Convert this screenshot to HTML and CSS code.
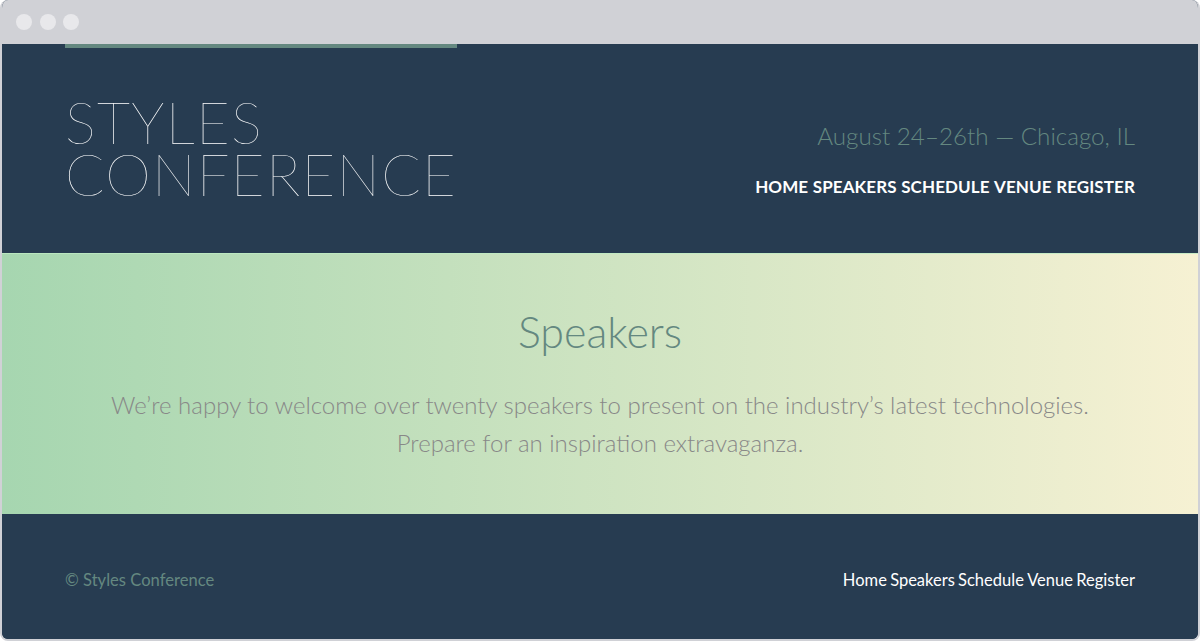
FILE: index.html
```html
<!DOCTYPE html>
<html lang="en">
<head>
<meta charset="utf-8">
<title>Styles Conference</title>
<link rel="stylesheet" href="styles.css">
</head>
<body>
<div class="window">
  <div class="chrome">
    <span class="dot"></span><span class="dot"></span><span class="dot"></span>
  </div>
  <div class="page">
    <header class="site-header">
      <div class="container header-inner">
        <h1 class="logo">Styles<br>Conference</h1>
        <div class="header-right">
          <h3 class="tagline">August 24&ndash;26th &mdash; Chicago, IL</h3>
          <nav class="primary-nav">
            <a href="#">Home</a>
            <a href="#">Speakers</a>
            <a href="#">Schedule</a>
            <a href="#">Venue</a>
            <a href="#">Register</a>
          </nav>
        </div>
      </div>
    </header>
    <section class="hero">
      <h2 class="hero-title">Speakers</h2>
      <p class="hero-text">We&rsquo;re happy to welcome over twenty speakers to present on the industry&rsquo;s latest technologies.<br>Prepare for an inspiration extravaganza.</p>
    </section>
    <footer class="site-footer">
      <div class="container footer-inner">
        <small class="copyright">&copy; Styles Conference</small>
        <nav class="footer-nav">
          <a href="#">Home</a>
          <a href="#">Speakers</a>
          <a href="#">Schedule</a>
          <a href="#">Venue</a>
          <a href="#">Register</a>
        </nav>
      </div>
    </footer>
  </div>
</div>
</body>
</html>
```
FILE: styles.css
```css
* { box-sizing: border-box; }
html, body { margin: 0; padding: 0; background: #ffffff; }
body { font-family: Lato, "Open Sans", "Liberation Sans", sans-serif; }

.window {
  width: 1200px;
  height: 641px;
  border: 2px solid #d0d1d6;
  border-top: 0;
  border-radius: 8px;
  overflow: hidden;
  display: flex;
  flex-direction: column;
  background: #273c51;
}

.chrome {
  height: 44px;
  flex: 0 0 44px;
  background: #d0d1d6;
  display: flex;
  align-items: center;
  gap: 7.5px;
  padding: 0 0 0 16px;
  margin: 0 -2px;
}
.dot {
  width: 16px;
  height: 16px;
  border-radius: 50%;
  background: #e8e8eb;
}

.page { flex: 1; display: flex; flex-direction: column; }

.container { margin: 0 63px; }

.site-header { background: #273c51; }
.header-inner {
  display: flex;
  justify-content: space-between;
  align-items: flex-start;
}

.logo {
  margin: 0;
  border-top: 4px solid #648880;
  padding: 48px 0 53px;
  color: #ffffff;
  font-size: 58px;
  font-weight: 200;
  line-height: 52px;
  letter-spacing: 1.3px;
  text-transform: uppercase;
}

.header-right {
  display: flex;
  flex-direction: column;
  align-items: flex-end;
  padding-top: 77px;
}
.tagline {
  margin: 0;
  color: #648880;
  font-size: 24.2px;
  font-weight: 300;
  line-height: 30px;
}
.primary-nav {
  margin-top: 26px;
  display: flex;
  gap: 4.5px;
  font-size: 17px;
  line-height: 20px;
  font-weight: 700;
  letter-spacing: 0.1px;
  text-transform: uppercase;
}
.primary-nav a, .footer-nav a { color: #ffffff; text-decoration: none; }

.hero {
  height: 261px;
  background: linear-gradient(to right, #a6d6b0, #f6f1d3);
  border-top: 1px solid rgba(190, 235, 195, 0.8);
  text-align: center;
  padding-top: 54px;
}
.hero-title {
  margin: 0;
  color: #648880;
  font-size: 43px;
  font-weight: 300;
  line-height: 48px;
}
.hero-text {
  margin: 30px 0 0;
  color: #888888;
  font-size: 24px;
  font-weight: 300;
  line-height: 38px;
}

.site-footer { flex: 1; background: #273c51; }
.footer-inner {
  display: flex;
  justify-content: space-between;
  padding-top: 55px;
  font-size: 16.5px;
  line-height: 22px;
}
.copyright { color: #648880; font-size: 16.6px; }
.footer-nav { display: flex; gap: 3.3px; }
```
